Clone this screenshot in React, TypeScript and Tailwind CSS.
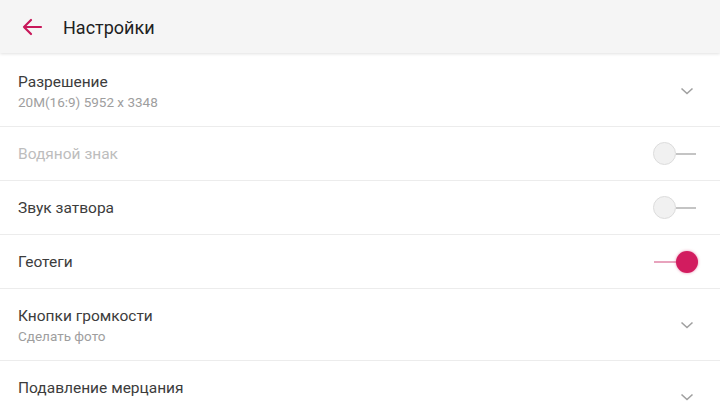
import React from "react";

const Chevron = () => (
  <svg width="14" height="14" viewBox="0 0 14 14" className="mr-[26px]">
    <path d="M1.5 4.5 L7 9.5 L12.5 4.5" fill="none" stroke="#a0a0a0" strokeWidth="1.6" />
  </svg>
);

const Toggle = ({ on }: { on: boolean }) =>
  on ? (
    <div className="flex items-center mr-[22px]">
      <div className="w-[22px] h-[2px] bg-[#e8a3bd]" />
      <div className="w-[22px] h-[22px] rounded-full bg-[#d21c5f] shadow-[0_0_3px_rgba(210,28,95,0.5)]" />
    </div>
  ) : (
    <div className="flex items-center mr-[24px]">
      <div className="w-[23px] h-[23px] rounded-full bg-[#f1f1f1] border border-[#dcdcdc]" />
      <div className="w-[20px] h-[2px] bg-[#c4c4c4]" />
    </div>
  );

const Row = ({
  title,
  sub,
  disabled,
  right,
  tall,
}: {
  title: string;
  sub?: string;
  disabled?: boolean;
  right: React.ReactNode;
  tall?: boolean;
}) => (
  <div
    className={`flex items-center justify-between pl-[18px] border-b border-[#ececec] ${
      tall ? "h-[72px]" : "h-[54px]"
    }`}
  >
    <div className={`flex flex-col ${tall ? "pt-[2px]" : ""}`}>
      <div className={`text-[15.5px] leading-[20px] ${disabled ? "text-[#bdbdbd]" : "text-[#3c3c3c]"}`}>{title}</div>
      {sub && <div className="text-[13.5px] leading-[18px] text-[#9e9e9e] mt-[1px]">{sub}</div>}
    </div>
    {right}
  </div>
);

export default function App() {
  return (
    <div className="w-[720px] h-[404px] overflow-hidden bg-white" style={{ fontFamily: "Roboto, 'Noto Sans', sans-serif" }}>
      <div className="h-[53px] bg-[#f5f5f5] flex items-center shadow-[0_1px_3px_rgba(0,0,0,0.12)] relative z-10">
        <svg width="22" height="18" viewBox="0 0 22 18" className="ml-[21px] mt-[1px]">
          <path d="M20 9 H3 M10 2 L3 9 L10 16" fill="none" stroke="#c8185a" strokeWidth="2.2" strokeLinecap="round" strokeLinejoin="round" />
        </svg>
        <div className="ml-[20px] text-[18px] text-[#212121] pt-[2px]">Настройки</div>
      </div>
      <div className="pt-[2px]">
        <Row title="Разрешение" sub="20M(16:9) 5952 x 3348" tall right={<Chevron />} />
        <Row title="Водяной знак" disabled right={<Toggle on={false} />} />
        <Row title="Звук затвора" right={<Toggle on={false} />} />
        <Row title="Геотеги" right={<Toggle on={true} />} />
        <Row title="Кнопки громкости" sub="Сделать фото" tall right={<Chevron />} />
        <Row title="Подавление мерцания" sub="Авто" tall right={<Chevron />} />
      </div>
    </div>
  );
}
